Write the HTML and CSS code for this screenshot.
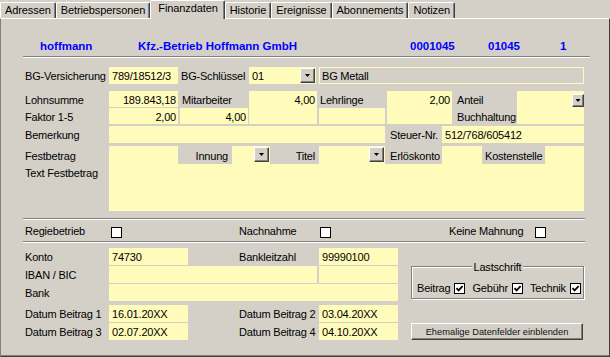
FILE: index.html
```html
<!DOCTYPE html>
<html lang="de">
<head>
    <meta charset="UTF-8">
    <meta name="viewport" content="width=device-width, initial-scale=1.0">
    <title>Finanzdaten</title>
    <link rel="stylesheet" href="styles.css">
</head>
<body>
    <div class="tabs">
        <div class="tab">Adressen</div>
        <div class="tab">Betriebspersonen</div>
        <div class="tab active">Finanzdaten</div>
        <div class="tab">Historie</div>
        <div class="tab">Ereignisse</div>
        <div class="tab">Abonnements</div>
        <div class="tab">Notizen</div>
    </div>

    <div class="page">
        <div class="head">
            <span>hoffmann</span>
            <span>Kfz.-Betrieb Hoffmann GmbH</span>
            <span>0001045</span>
            <span>01045</span>
            <span>1</span>
        </div>
        <div class="sep head-sep"></div>

        <div class="fgrid row1">
            <div class="lbl">BG-Versicherung</div>
            <div class="fld">789/18512/3</div>
            <div class="lbl">BG-Schlüssel</div>
            <div class="fld combo key"><span>01</span><span class="dd"></span></div>
            <div class="ro">BG Metall</div>
        </div>

        <div class="fgrid rows23">
            <div class="lbl">Lohnsumme</div>
            <div class="fld num">189.843,18</div>
            <div class="lbl mitarbeiter">Mitarbeiter</div>
            <div class="fld num tall">4,00</div>
            <div class="lbl">Lehrlinge</div>
            <div class="fld num tall ml">2,00</div>
            <div class="lbl anteil-lbl">Anteil</div>
            <div class="fld tall anteil"><span class="dd small"></span></div>
            <div class="lbl">Faktor 1-5</div>
            <div class="fld num">2,00</div>
            <div class="fld num ml">4,00</div>
            <div class="fld ml"></div>
            <div class="lbl anteil-lbl">Buchhaltung</div>
        </div>

        <div class="fgrid row4">
            <div class="lbl">Bemerkung</div>
            <div class="fld wide"></div>
            <div class="steuer">
                <span class="lbl">Steuer-Nr.</span>
                <span class="fld">512/768/605412</span>
            </div>
        </div>

        <div class="fgrid fest">
            <div class="fest-lbls">
                <div>Festbetrag</div>
                <div>Text Festbetrag</div>
            </div>
            <div class="memo">
                <div class="memo-top">
                    <span class="cell betrag"></span>
                    <span class="cap right innung">Innung</span>
                    <span class="cell combo innung-box"><span class="dd"></span></span>
                    <span class="cap right titel">Titel</span>
                    <span class="cell combo titel-box"><span class="dd"></span></span>
                    <span class="cap erloes">Erlöskonto</span>
                    <span class="cell erloes-box"></span>
                    <span class="cap kosten">Kostenstelle</span>
                </div>
            </div>
        </div>

        <div class="sep sep1"></div>
        <div class="checks">
            <span class="lbl">Regiebetrieb</span><span class="cb first"></span>
            <span>Nachnahme</span><span class="cb second"></span>
            <span>Keine Mahnung</span><span class="cb"></span>
        </div>
        <div class="sep"></div>

        <div class="bank">
            <div class="bgrid">
                <div class="lbl">Konto</div>
                <div class="fld">74730</div>
                <div class="lbl c4">Bankleitzahl</div>
                <div class="fld">99990100</div>

                <div class="lbl">IBAN / BIC</div>
                <div class="fld iban"></div>
                <div class="fld"></div>

                <div class="lbl">Bank</div>
                <div class="fld bankname"></div>

                <div class="gap"></div>

                <div class="lbl">Datum Beitrag 1</div>
                <div class="fld">16.01.20XX</div>
                <div class="lbl c4">Datum Beitrag 2</div>
                <div class="fld">03.04.20XX</div>

                <div class="lbl">Datum Beitrag 3</div>
                <div class="fld">02.07.20XX</div>
                <div class="lbl c4">Datum Beitrag 4</div>
                <div class="fld">04.10.20XX</div>
            </div>

            <div class="side">
                <div class="group">
                    <span class="legend">Lastschrift</span>
                    <span>Beitrag</span>
                    <span class="cb on"><svg viewBox="0 0 9 9" width="9" height="9"><path d="M1.5 4.2 L3.6 6.4 L7.6 2.2"/></svg></span>
                    <span class="gl">Gebühr</span>
                    <span class="cb on"><svg viewBox="0 0 9 9" width="9" height="9"><path d="M1.5 4.2 L3.6 6.4 L7.6 2.2"/></svg></span>
                    <span class="gl">Technik</span>
                    <span class="cb on"><svg viewBox="0 0 9 9" width="9" height="9"><path d="M1.5 4.2 L3.6 6.4 L7.6 2.2"/></svg></span>
                </div>
                <button class="btn">Ehemalige Datenfelder einblenden</button>
            </div>
        </div>
    </div>
</body>
</html>
```

FILE: styles.css
```css
body {
    margin: 0;
    width: 610px;
    height: 357px;
    overflow: hidden;
    background: #d4d0c8;
    font-family: "Liberation Sans", Arial, sans-serif;
    font-size: 11px;
    letter-spacing: -0.2px;
    color: #000;
}

/* tab strip */
.tabs {
    display: flex;
    align-items: flex-end;
    height: 18px;
}
.tab {
    height: 16px;
    box-sizing: border-box;
    padding: 0 4px;
    border-top: 1px solid #fff;
    border-left: 1px solid #fff;
    border-right: 1px solid #404040;
    box-shadow: inset -1px 0 #808080;
    border-radius: 2px 2px 0 0;
    line-height: 15px;
    letter-spacing: -0.1px;
    white-space: nowrap;
}
.tab.active {
    position: relative;
    height: 19px;
    margin-bottom: -1px;
    padding: 0 6px 0 7px;
    background: #d4d0c8;
}

.page {
    box-sizing: border-box;
    height: 339px;
    padding-left: 22px;
    border-top: 1px solid #fff;
    border-left: 1px solid #808080;
    border-right: 1px solid #404040;
    border-bottom: 1px solid #404040;
    box-shadow: inset 0 -1px #808080;
}

.head {
    display: grid;
    grid-template-columns: 98px 272px 78px 72px auto;
    padding: 20px 0 0 17px;
    font-size: 11.5px;
    font-weight: bold;
    letter-spacing: 0;
    line-height: 14px;
    color: #0000ff;
}

.sep {
    width: 562px;
    border-top: 1px solid #808080;
    border-bottom: 1px solid #fff;
}
.head-sep {
    width: 567px;
    margin-top: 3px;
}
.sep1 {
    margin-top: 7px;
}

/* form rows */
.fgrid {
    display: grid;
    grid-template-columns: 86px 70px 70px 69px 68px 67px 64px 68px;
    grid-auto-rows: 17px;
}
.row1 {
    margin-top: 9px;
}
.rows23 {
    margin-top: 7px;
}
.row4 {
    margin-top: 1px;
}
.fest {
    margin-top: 3px;
    grid-template-rows: 18px 47px;
}

.lbl {
    padding: 1px 0 0 2px;
    line-height: 17px;
    white-space: nowrap;
}
.fld {
    box-sizing: border-box;
    margin-right: 1px;
    padding: 1px 2px 0 3px;
    background: #fffcbb;
    line-height: 17px;
    white-space: nowrap;
    overflow: hidden;
}
.num {
    text-align: right;
}
.ml {
    margin-left: 1px;
}
.tall {
    grid-row: span 2;
}
.rows23 .fld {
    margin-bottom: 1px;
}
.mitarbeiter {
    padding-left: 3px;
}
.anteil-lbl {
    padding-left: 4px;
}

.combo {
    display: flex;
    justify-content: space-between;
    align-items: flex-start;
    padding-right: 1px;
}
.key {
    margin-right: 2px;
}
.anteil {
    display: flex;
    justify-content: flex-end;
    padding-right: 0;
}

.dd {
    flex: none;
    width: 15px;
    height: 15px;
    box-sizing: border-box;
    display: flex;
    align-items: center;
    justify-content: center;
    border: 1px solid;
    border-color: #fff #404040 #404040 #fff;
    box-shadow: inset -1px -1px #808080;
    background: #d4d0c8;
}
.dd::after {
    content: "";
    width: 5px;
    height: 3px;
    background: #000;
    clip-path: polygon(0 0, 100% 0, 50% 100%);
}
.dd.small {
    width: 12px;
    height: 13px;
    margin-top: 2px;
}

.ro {
    grid-column: 5 / 9;
    box-sizing: border-box;
    margin: 0 1px;
    padding: 0 0 0 2px;
    border: 1px solid #fffcbb;
    line-height: 17px;
}

.wide {
    grid-column: 2 / 6;
}
.steuer {
    grid-column: 6 / 9;
    display: flex;
}
.steuer .lbl {
    width: 56px;
    box-sizing: border-box;
    padding-left: 4px;
}
.steuer .fld {
    flex: 1;
}

/* Festbetrag memo */
.fest-lbls {
    grid-row: 1 / 3;
    padding: 2px 0 0 2px;
    line-height: 17px;
}
.memo {
    grid-column: 2 / 9;
    grid-row: 1 / 3;
    margin-right: 1px;
    background: #fffcbb;
}
.memo-top {
    display: flex;
    height: 18px;
}
.memo-top > span {
    box-sizing: border-box;
    height: 18px;
}
.cap {
    padding-top: 2px;
    background: #d4d0c8;
    line-height: 17px;
    white-space: nowrap;
}
.cap.right {
    text-align: right;
    padding-right: 4px;
}
.cell.combo {
    justify-content: flex-end;
    padding-top: 1px;
}
.betrag { width: 69px; }
.innung { width: 54px; }
.innung-box { width: 38px; }
.titel { width: 49px; }
.titel-box { width: 66px; }
.erloes { width: 57px; padding-left: 5px; }
.erloes-box { width: 40px; }
.kosten { width: 63px; padding-left: 3px; }

/* checkboxes */
.checks {
    display: grid;
    grid-template-columns: 86px 130px 80px 130px 86px auto;
    height: 21px;
    box-sizing: border-box;
    padding-top: 3px;
    align-items: start;
    line-height: 17px;
}
.checks .lbl {
    padding-top: 0;
}
.checks .cb {
    margin-top: 4px;
}
.checks .first {
    margin-left: 2px;
}
.checks .second {
    margin-left: 1px;
}
.cb {
    display: block;
    width: 11px;
    height: 11px;
    box-sizing: border-box;
    border: 1px solid #000;
    background: #fff;
}
.cb svg {
    display: block;
}
.cb path {
    fill: none;
    stroke: #000;
    stroke-width: 1.8;
}

/* bank area */
.bank {
    display: flex;
    margin-top: 5px;
}
.bgrid {
    display: grid;
    width: 376px;
    grid-template-columns: 86px 80px 50px 80px 80px;
    grid-template-rows: 17px 17px 17px 2px 17px 17px;
    row-gap: 1px;
}
.bgrid .c4 {
    grid-column: 4;
    padding-left: 0;
}
.iban {
    grid-column: 2 / 5;
    margin-right: 2px;
}
.bankname {
    grid-column: 2 / 6;
}
.gap {
    grid-column: 1 / -1;
}

.side {
    margin-left: 12px;
    width: 174px;
}
.group {
    position: relative;
    display: flex;
    align-items: flex-start;
    width: 173px;
    height: 33px;
    box-sizing: border-box;
    margin-top: 18px;
    padding: 13px 0 0 5px;
    border: 1px solid #808080;
    box-shadow: inset 1px 1px #fff, 1px 1px #fff;
    line-height: 17px;
}
.group .cb {
    margin: 3px 0 0 4px;
}
.group .gl {
    margin-left: 7px;
}
.legend {
    position: absolute;
    top: -6px;
    left: 50%;
    transform: translateX(-50%);
    padding: 0 2px;
    background: #d4d0c8;
    line-height: 13px;
}

.btn {
    display: block;
    width: 172px;
    height: 17px;
    box-sizing: border-box;
    margin-top: 24px;
    padding: 0;
    border: 1px solid;
    border-color: #fff #404040 #404040 #fff;
    box-shadow: inset -1px -1px #808080;
    background: #d4d0c8;
    font-family: "Liberation Sans", Arial, sans-serif;
    font-size: 9.3px;
    letter-spacing: 0;
    color: #111;
}
```
